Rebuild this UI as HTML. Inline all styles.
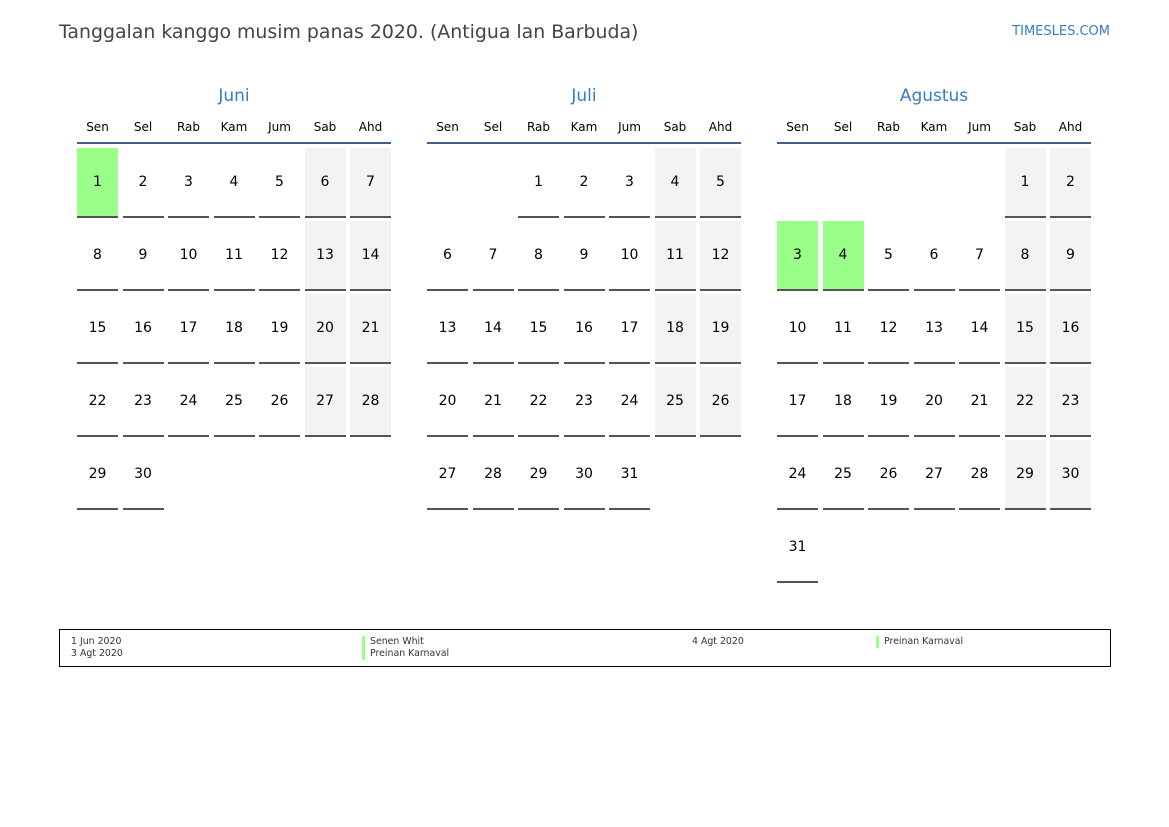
<!DOCTYPE html>
<html><head><meta charset="utf-8"><style>
*{margin:0;padding:0;box-sizing:border-box}
body{width:1169px;height:827px;background:#fff;font-family:"DejaVu Sans","Liberation Sans",sans-serif;position:relative;overflow:hidden;color:#000}
.title{position:absolute;left:59px;top:21px;font-size:18.9px;color:#444;white-space:nowrap}
.site{position:absolute;right:59px;top:24px;font-size:13px;color:#3a7cc0}
.m{position:absolute;top:86px;width:314px}
.mt{text-align:center;font-size:17px;color:#3a7cc0;height:24px;line-height:20px}
.hd{display:grid;grid-template-columns:repeat(7,41px);column-gap:4.5px;margin-top:9px;height:25px;border-bottom:2px solid #3d5f8c;font-size:12px;line-height:16px}
.hd div{text-align:center}
.g{display:grid;grid-template-columns:repeat(7,41px);column-gap:4.5px;row-gap:3px;margin-top:4px}
.g div{height:70px;border-bottom:2px solid #555;text-align:center;line-height:68px;font-size:14px}
.g .w{background:#f3f3f3}
.g .h{background:#99ff88}
.g .e{border:none}
.leg{position:absolute;left:59px;top:629px;width:1052px;height:38px;border:1.5px solid #000;font-size:9.4px;color:#333}
.leg span{position:absolute;white-space:nowrap;line-height:12px}
.bar{border-left:3px solid #99ff88;padding-left:5px}
</style></head><body>
<div class="title">Tanggalan kanggo musim panas 2020. (Antigua lan Barbuda)</div>
<div class="site">TIMESLES.COM</div>

<div class="m" style="left:77px">
<div class="mt">Juni</div>
<div class="hd"><div>Sen</div><div>Sel</div><div>Rab</div><div>Kam</div><div>Jum</div><div>Sab</div><div>Ahd</div></div>
<div class="g">
<div class="h">1</div><div>2</div><div>3</div><div>4</div><div>5</div><div class="w">6</div><div class="w">7</div>
<div>8</div><div>9</div><div>10</div><div>11</div><div>12</div><div class="w">13</div><div class="w">14</div>
<div>15</div><div>16</div><div>17</div><div>18</div><div>19</div><div class="w">20</div><div class="w">21</div>
<div>22</div><div>23</div><div>24</div><div>25</div><div>26</div><div class="w">27</div><div class="w">28</div>
<div>29</div><div>30</div>
</div></div>

<div class="m" style="left:427px">
<div class="mt">Juli</div>
<div class="hd"><div>Sen</div><div>Sel</div><div>Rab</div><div>Kam</div><div>Jum</div><div>Sab</div><div>Ahd</div></div>
<div class="g">
<div class="e"></div><div class="e"></div><div>1</div><div>2</div><div>3</div><div class="w">4</div><div class="w">5</div>
<div>6</div><div>7</div><div>8</div><div>9</div><div>10</div><div class="w">11</div><div class="w">12</div>
<div>13</div><div>14</div><div>15</div><div>16</div><div>17</div><div class="w">18</div><div class="w">19</div>
<div>20</div><div>21</div><div>22</div><div>23</div><div>24</div><div class="w">25</div><div class="w">26</div>
<div>27</div><div>28</div><div>29</div><div>30</div><div>31</div>
</div></div>

<div class="m" style="left:777px">
<div class="mt">Agustus</div>
<div class="hd"><div>Sen</div><div>Sel</div><div>Rab</div><div>Kam</div><div>Jum</div><div>Sab</div><div>Ahd</div></div>
<div class="g">
<div class="e"></div><div class="e"></div><div class="e"></div><div class="e"></div><div class="e"></div><div class="w">1</div><div class="w">2</div>
<div class="h">3</div><div class="h">4</div><div>5</div><div>6</div><div>7</div><div class="w">8</div><div class="w">9</div>
<div>10</div><div>11</div><div>12</div><div>13</div><div>14</div><div class="w">15</div><div class="w">16</div>
<div>17</div><div>18</div><div>19</div><div>20</div><div>21</div><div class="w">22</div><div class="w">23</div>
<div>24</div><div>25</div><div>26</div><div>27</div><div>28</div><div class="w">29</div><div class="w">30</div>
<div>31</div>
</div></div>

<div class="leg">
<span style="left:11px;top:6px">1 Jun 2020</span>
<span style="left:11px;top:18px">3 Agt 2020</span>
<span class="bar" style="left:302px;top:6px">Senen Whit</span>
<span class="bar" style="left:302px;top:18px">Preinan Karnaval</span>
<span style="left:632px;top:6px">4 Agt 2020</span>
<span class="bar" style="left:816px;top:6px">Preinan Karnaval</span>
</div>
</body></html>
